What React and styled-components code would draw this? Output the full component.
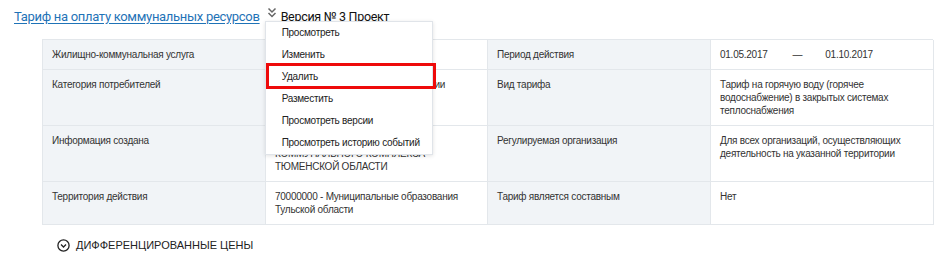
import React from "react"
import styled, { createGlobalStyle } from "styled-components"

const GlobalStyle = createGlobalStyle`
  body {
    margin: 0;
    background: #fff;
    font-family: "Liberation Sans", Arial, sans-serif;
    color: #333;
  }
`

const rows = [
  {
    label: "Жилищно-коммунальная услуга",
    value: "Горячее водоснабжение",
    label2: "Период действия",
    period: ["01.05.2017", "01.10.2017"],
  },
  {
    label: "Категория потребителей",
    value: "Население и приравненные категории потребителей",
    label2: "Вид тарифа",
    value2:
      "Тариф на горячую воду (горячее водоснабжение) в закрытых системах теплоснабжения",
  },
  {
    label: "Информация создана",
    value: ["ДЕПАРТАМЕНТ ЖИЛИЩНО-", "КОММУНАЛЬНОГО КОМПЛЕКСА", "ТЮМЕНСКОЙ ОБЛАСТИ"],
    label2: "Регулируемая организация",
    value2:
      "Для всех организаций, осуществляющих деятельность на указанной территории",
  },
  {
    label: "Территория действия",
    value: "70000000 - Муниципальные образования Тульской области",
    label2: "Тариф является составным",
    value2: "Нет",
  },
]

const menuItems = [
  "Просмотреть",
  "Изменить",
  "Удалить",
  "Разместить",
  "Просмотреть версии",
  "Просмотреть историю событий",
]

const App = () => {
  return (
    <Page>
      <GlobalStyle />
      <Header>
        <TitleLink href="#">Тариф на оплату коммунальных ресурсов</TitleLink>
        <Trigger>
          <svg width="10" height="12" viewBox="0 0 10 12">
            <polyline points="1.5,1.5 5,5 8.5,1.5" fill="none" stroke="#666" strokeWidth="1.5" />
            <polyline points="1.5,6 5,9.5 8.5,6" fill="none" stroke="#666" strokeWidth="1.5" />
          </svg>
          <Menu>
            {menuItems.map((item) => (
              <MenuItem key={item} $marked={item === "Удалить"}>
                {item}
              </MenuItem>
            ))}
          </Menu>
        </Trigger>
        <Version>Версия № 3 Проект</Version>
      </Header>

      <Table>
        {rows.map((row) => (
          <React.Fragment key={row.label}>
            <Cell $label>{row.label}</Cell>
            <Cell>
              {Array.isArray(row.value)
                ? row.value.map((line) => <div key={line}>{line}</div>)
                : row.value}
            </Cell>
            <Cell $label>{row.label2}</Cell>
            <Cell>
              {row.period ? (
                <Period>
                  <span>{row.period[0]}</span>
                  <Dash>—</Dash>
                  <span>{row.period[1]}</span>
                </Period>
              ) : (
                row.value2
              )}
            </Cell>
          </React.Fragment>
        ))}
      </Table>

      <Section>
        <svg width="13" height="13" viewBox="0 0 13 13">
          <circle cx="6.5" cy="6.5" r="5.6" fill="none" stroke="#222" strokeWidth="1.3" />
          <polyline points="4,5.5 6.5,8 9,5.5" fill="none" stroke="#222" strokeWidth="1.3" />
        </svg>
        <SectionTitle>Дифференцированные цены</SectionTitle>
      </Section>
    </Page>
  )
}

export default App

const Page = styled.div`
  width: 947px;
  height: 260px;
  overflow: hidden;
`
const Header = styled.div`
  display: flex;
  align-items: center;
  height: 20px;
  margin-top: 6px;
  padding-left: 14px;
  font-family: Roboto, "Liberation Sans", sans-serif;
`
const TitleLink = styled.a`
  font-size: 13px;
  letter-spacing: -0.3px;
  color: #1f73b7;
  text-decoration: underline;
  text-underline-offset: 2px;
`
const Trigger = styled.span`
  position: relative;
  display: flex;
  align-items: center;
  margin-left: 7px;
  height: 20px;
  svg {
    margin-top: -6px;
  }
`
const Version = styled.span`
  margin-left: 4px;
  font-size: 12.5px;
  letter-spacing: -0.3px;
  color: #111;
`
const Menu = styled.ul`
  position: absolute;
  top: 15px;
  left: -2px;
  z-index: 5;
  width: 166px;
  margin: 0;
  padding: 0;
  list-style: none;
  background: #fff;
  border: 1px solid #e0e4e9;
  box-shadow: 0 1px 4px rgba(0, 0, 0, 0.12);
  font-family: "Liberation Sans", Arial, sans-serif;
  font-size: 10px;
  letter-spacing: -0.25px;
  color: #222;
`
const MenuItem = styled.li`
  position: relative;
  height: 22px;
  line-height: 22px;
  padding-left: 16px;
  white-space: nowrap;

  &::after {
    content: "";
    display: ${(p) => (p.$marked ? "block" : "none")};
    position: absolute;
    top: -3px;
    left: 0;
    right: -4px;
    bottom: -1px;
    border: 3px solid #ee0a0a;
  }
`
const Table = styled.div`
  display: grid;
  grid-template-columns: 223px 222px 223px 223px;
  margin: 13px 0 0 42px;
  width: 891px;
  border-top: 1px solid #e3e7eb;
  border-left: 1px solid #e3e7eb;
  box-sizing: border-box;
`
const Cell = styled.div`
  padding: 8px 10px 8px 9px;
  min-height: 13px;
  font-size: 10px;
  letter-spacing: -0.25px;
  line-height: 13px;
  color: #333;
  background: ${(p) => (p.$label ? "#f1f4f7" : "#fff")};
  border-right: 1px solid #e3e7eb;
  border-bottom: 1px solid #e3e7eb;
`
const Period = styled.div`
  display: flex;
`
const Dash = styled.span`
  margin: 0 23px 0 25px;
`
const Section = styled.div`
  display: flex;
  align-items: center;
  gap: 6px;
  margin: 12px 0 0 57px;
  height: 16px;
`
const SectionTitle = styled.span`
  font-size: 11px;
  text-transform: uppercase;
  color: #222;
`
